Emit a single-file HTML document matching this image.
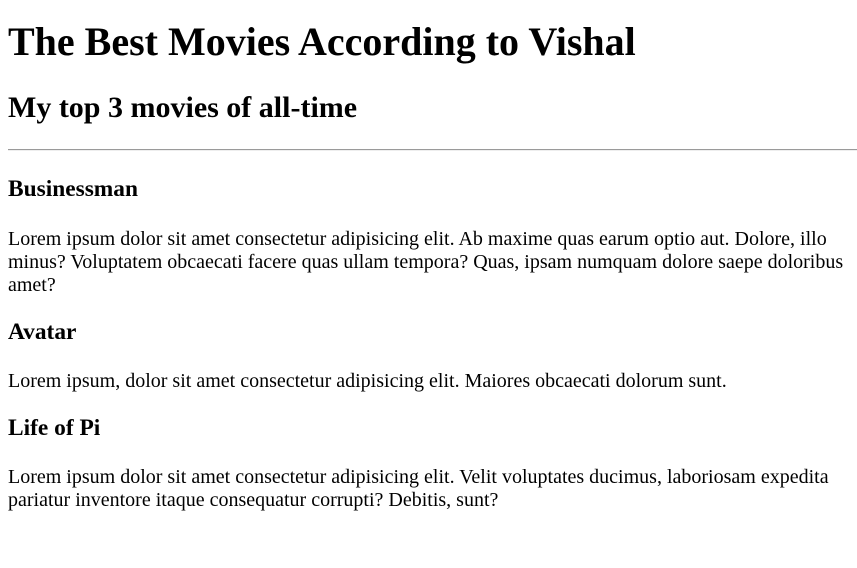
<!DOCTYPE html>
<html><head><meta charset="utf-8"><style>
body{margin:0 0 8px 8px;font-family:"Liberation Serif",serif;color:#000;background:#fff;font-size:20px;line-height:1.15;}
h1{font-size:40px;margin:19px 8px 26px 0;}
h2{font-size:30px;margin:26px 8px 23px 0;}
hr{margin:0 0 25px 0;border:0;border-top:1px solid #9a9a9a;border-bottom:1px solid #eee;}
h3{font-size:23.4px;margin:21.4px 8px 22.4px 0;}
p{margin:24.5px 8px 21.4px 0;}
hr + h3{margin-top:0;}
</style></head><body>
<h1>The Best Movies According to Vishal</h1>
<h2>My top 3 movies of all-time</h2>
<hr>
<h3>Businessman</h3>
<p style="margin-top:26px">Lorem ipsum dolor sit amet consectetur adipisicing elit. Ab maxime quas earum optio aut. Dolore, illo minus? Voluptatem obcaecati facere quas ullam tempora? Quas, ipsam numquam dolore saepe doloribus amet?</p>
<h3>Avatar</h3>
<p>Lorem ipsum, dolor sit amet consectetur adipisicing elit. Maiores obcaecati dolorum sunt.</p>
<h3>Life of Pi</h3>
<p>Lorem ipsum dolor sit amet consectetur adipisicing elit. Velit voluptates ducimus, laboriosam expedita pariatur inventore itaque consequatur corrupti? Debitis, sunt?</p>
</body></html>
